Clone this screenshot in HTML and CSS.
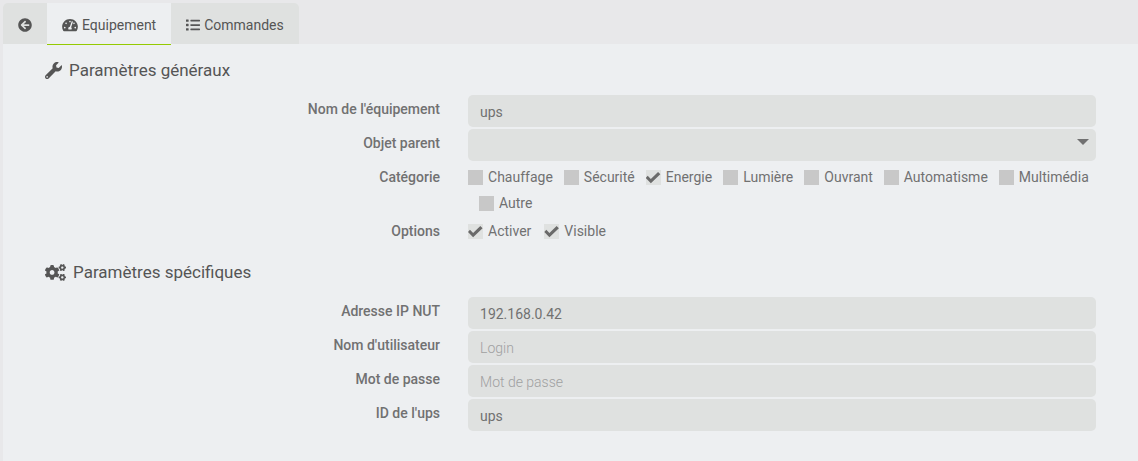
FILE: index.html
```html
<!DOCTYPE html>
<html lang="fr">
<head>
<meta charset="utf-8">
<meta name="viewport" content="width=device-width, initial-scale=1">
<title>Equipement</title>
<link rel="stylesheet" href="styles.css">
</head>
<body>
<nav class="tabs">
  <a class="tab" href="#retour" aria-label="Retour"><svg class="icon" viewBox="0 0 512 512"><path d="M256 504C119 504 8 393 8 256S119 8 256 8s248 111 248 248-111 248-248 248zm28.900-143.600L209.400 288H392c13.300 0 24-10.700 24-24v-16c0-13.300-10.700-24-24-24H209.400l75.500-72.400c9.700-9.300 9.900-24.800.4-34.300l-11-10.900c-9.400-9.400-24.600-9.400-33.900 0L107.700 239c-9.400 9.400-9.400 24.600 0 33.900l132.700 132.700c9.400 9.400 24.600 9.400 33.900 0l11-10.900c9.500-9.500 9.300-25-.4-34.300z"/></svg></a>
  <a class="tab tab-active" href="#equipement" aria-current="page"><svg class="icon icon-gauge" viewBox="0 0 576 512"><path d="M288 32C128.940 32 0 160.940 0 320c0 52.800 14.250 102.260 39.060 144.800 5.610 9.620 16.300 15.200 27.440 15.200h443c11.140 0 21.830-5.580 27.440-15.200C561.750 422.260 576 372.800 576 320c0-159.060-128.940-288-288-288zm0 64c14.710 0 26.580 10.130 30.320 23.650-1.110 2.260-2.640 4.230-3.450 6.670l-9.220 27.670c-5.130 3.490-10.970 6.010-17.640 6.010-17.670 0-32-14.330-32-32S270.330 96 288 96zM96 384c-17.670 0-32-14.330-32-32s14.330-32 32-32 32 14.330 32 32-14.330 32-32 32zm48-160c-17.670 0-32-14.330-32-32s14.330-32 32-32 32 14.330 32 32-14.330 32-32 32zm246.770-72.410l-61.330 184C343.130 347.330 352 364.540 352 384c0 11.720-3.380 22.550-8.880 32H232.880c-5.500-9.450-8.880-20.280-8.880-32 0-33.940 26.500-61.430 59.900-63.590l61.340-184.010c4.170-12.560 17.730-19.450 30.360-15.170 12.570 4.190 19.350 17.790 15.170 30.360zm14.660 57.200l15.520-46.550c3.470-1.290 7.130-2.230 11.050-2.230 17.670 0 32 14.330 32 32s-14.330 32-32 32c-11.380-.01-20.890-6.280-26.570-15.220zM480 384c-17.670 0-32-14.330-32-32s14.330-32 32-32 32 14.330 32 32-14.330 32-32 32z"/></svg>Equipement</a>
  <a class="tab" href="#commandes"><svg class="icon" viewBox="0 0 512 512"><path d="M16 52h64q16 0 16 16v56q0 16-16 16H16q-16 0-16-16V68q0-16 16-16zM16 212h64q16 0 16 16v56q0 16-16 16H16q-16 0-16-16v-56q0-16 16-16zM16 372h64q16 0 16 16v56q0 16-16 16H16q-16 0-16-16v-56q0-16 16-16zM176 64h320q16 0 16 16v32q0 16-16 16H176q-16 0-16-16V80q0-16 16-16zM176 224h320q16 0 16 16v32q0 16-16 16H176q-16 0-16-16v-32q0-16 16-16zM176 384h320q16 0 16 16v32q0 16-16 16H176q-16 0-16-16v-32q0-16 16-16z"/></svg>Commandes</a>
</nav>
<main class="panel">
  <form>
    <section class="section">
      <h2 class="title"><svg class="icon-wrench" viewBox="0 0 512 512"><path d="M507.730 109.100c-2.240-9.030-13.540-12.090-20.120-5.510l-74.360 74.360-67.880-11.310-11.310-67.880 74.360-74.360c6.620-6.620 3.430-17.900-5.660-20.160-47.380-11.740-99.550.91-136.580 37.930-39.640 39.640-50.550 97.100-34.050 147.200L18.740 402.760c-24.990 24.990-24.990 65.510 0 90.500 24.990 24.990 65.510 24.990 90.500 0l213.210-213.210c50.120 16.710 107.470 5.680 147.370-34.220 37.070-37.070 49.700-89.320 37.910-136.730zM64 472c-13.250 0-24-10.750-24-24 0-13.260 10.750-24 24-24s24 10.740 24 24c0 13.250-10.750 24-24 24z"/></svg>Paramètres généraux</h2>
      <div class="rows">
        <div class="row"><label class="label" for="nom">Nom de l'équipement</label><input class="field" id="nom" type="text" value="ups"></div>
        <div class="row"><label class="label" for="parent">Objet parent</label>
          <div class="select-wrap"><select class="field" id="parent"><option></option></select></div></div>
        <div class="row" role="group" aria-labelledby="categorie"><span class="label" id="categorie">Catégorie</span>
          <div class="checks">
            <label class="check"><input type="checkbox">Chauffage</label>
            <label class="check"><input type="checkbox">Sécurité</label>
            <label class="check"><input type="checkbox" checked>Energie</label>
            <label class="check"><input type="checkbox">Lumière</label>
            <label class="check"><input type="checkbox">Ouvrant</label>
            <label class="check"><input type="checkbox">Automatisme</label>
            <label class="check"><input type="checkbox">Multimédia</label>
            <label class="check"><input type="checkbox">Autre</label>
          </div></div>
        <div class="row" role="group" aria-labelledby="options"><span class="label" id="options">Options</span>
          <div class="checks checks-options">
            <label class="check"><input type="checkbox" checked>Activer</label>
            <label class="check"><input type="checkbox" checked>Visible</label>
          </div></div>
      </div>
    </section>
    <section class="section">
      <h2 class="title"><svg class="icon-cogs" viewBox="0 0 640 512"><path d="M512.100 191l-8.200 14.300c-3 5.300-9.400 7.500-15.100 5.400-11.800-4.400-22.600-10.700-32.100-18.600-4.600-3.800-5.800-10.500-2.800-15.700l8.200-14.300c-6.900-8-12.300-17.300-15.900-27.400h-16.500c-6 0-11.200-4.300-12.200-10.300-2-12-2.100-24.600 0-37.100 1-6 6.200-10.400 12.200-10.400h16.500c3.600-10.100 9-19.400 15.900-27.400l-8.200-14.300c-3-5.200-1.900-11.900 2.800-15.700 9.500-7.900 20.400-14.200 32.100-18.600 5.700-2.100 12.100.1 15.100 5.400l8.200 14.300c10.500-1.900 21.200-1.900 31.700 0L552 6.300c3-5.300 9.400-7.500 15.100-5.400 11.800 4.400 22.600 10.700 32.100 18.600 4.600 3.800 5.800 10.500 2.800 15.700l-8.200 14.300c6.900 8 12.300 17.300 15.900 27.400h16.500c6 0 11.200 4.300 12.200 10.300 2 12 2.100 24.600 0 37.100-1 6-6.200 10.400-12.200 10.400h-16.500c-3.600 10.100-9 19.400-15.900 27.400l8.200 14.300c3 5.200 1.900 11.900-2.800 15.700-9.500 7.900-20.400 14.200-32.100 18.600-5.700 2.100-12.100-.1-15.100-5.400l-8.200-14.300c-10.400 1.900-21.200 1.900-31.700 0zm-10.500-58.800c38.500 29.600 82.400-14.300 52.800-52.800-38.500-29.700-82.400 14.300-52.800 52.800zM386.300 286.100l33.700 16.800c10.100 5.800 14.500 18.100 10.500 29.100-8.900 24.200-26.400 46.400-42.600 65.800-7.400 8.900-20.200 11.100-30.300 5.300l-29.100-16.800c-16 13.700-34.600 24.600-54.900 31.700v33.600c0 11.600-8.300 21.600-19.700 23.600-24.600 4.200-50.400 4.400-75.900 0-11.500-2-20-11.900-20-23.600V418c-20.300-7.200-38.900-18-54.900-31.700L74 403c-10 5.800-22.900 3.600-30.300-5.300-16.200-19.400-33.300-41.600-42.200-65.700-4-10.900.4-23.200 10.500-29.100l33.300-16.800c-3.900-20.900-3.900-42.400 0-63.400L12 205.800c-10.100-5.800-14.600-18.100-10.500-29 8.900-24.200 26-46.400 42.200-65.800 7.400-8.900 20.200-11.100 30.300-5.300l29.100 16.800c16-13.700 34.600-24.600 54.900-31.700V57.100c0-11.500 8.200-21.500 19.600-23.500 24.600-4.200 50.500-4.400 76-.1 11.500 2 20 11.900 20 23.600v33.600c20.300 7.200 38.900 18 54.900 31.700l29.100-16.800c10-5.800 22.900-3.600 30.300 5.300 16.200 19.400 33.200 41.600 42.100 65.800 4 10.900.1 23.200-10 29.100l-33.700 16.800c3.900 21 3.900 42.500 0 63.500zm-117.600 21.100c59.200-77-28.700-164.900-105.700-105.700-59.200 77 28.700 164.900 105.700 105.700zm243.400 182.700l-8.200 14.300c-3 5.300-9.400 7.500-15.100 5.400-11.800-4.400-22.600-10.700-32.100-18.600-4.600-3.800-5.800-10.500-2.800-15.700l8.200-14.300c-6.900-8-12.300-17.300-15.900-27.400h-16.500c-6 0-11.200-4.300-12.200-10.300-2-12-2.100-24.600 0-37.100 1-6 6.200-10.400 12.200-10.400h16.500c3.600-10.100 9-19.400 15.900-27.400l-8.200-14.300c-3-5.200-1.900-11.900 2.800-15.700 9.500-7.900 20.400-14.200 32.100-18.600 5.700-2.100 12.100.1 15.100 5.400l8.200 14.300c10.500-1.900 21.200-1.900 31.700 0l8.200-14.300c3-5.300 9.400-7.500 15.100-5.400 11.800 4.400 22.600 10.700 32.100 18.600 4.600 3.800 5.800 10.500 2.800 15.700l-8.200 14.300c6.900 8 12.300 17.300 15.900 27.400h16.500c6 0 11.200 4.300 12.200 10.300 2 12 2.100 24.600 0 37.100-1 6-6.200 10.400-12.200 10.400h-16.500c-3.600 10.100-9 19.400-15.900 27.400l8.200 14.300c3 5.200 1.900 11.900-2.800 15.700-9.500 7.900-20.400 14.200-32.100 18.600-5.700 2.100-12.100-.1-15.100-5.400l-8.200-14.300c-10.400 1.900-21.200 1.900-31.700 0zM501.600 431c38.500 29.600 82.400-14.300 52.800-52.800-38.500-29.600-82.400 14.300-52.800 52.800z"/></svg>Paramètres spécifiques</h2>
      <div class="rows">
        <div class="row"><label class="label" for="ip">Adresse IP NUT</label><input class="field" id="ip" type="text" value="192.168.0.42"></div>
        <div class="row"><label class="label" for="login">Nom d'utilisateur</label><input class="field" id="login" type="text" placeholder="Login"></div>
        <div class="row"><label class="label" for="pass">Mot de passe</label><input class="field" id="pass" type="password" placeholder="Mot de passe"></div>
        <div class="row"><label class="label" for="ups">ID de l'ups</label><input class="field" id="ups" type="text" value="ups"></div>
      </div>
    </section>
  </form>
</main>
</body>
</html>
```
FILE: styles.css
```css
* {
  box-sizing: border-box;
}

body {
  display: flex;
  flex-direction: column;
  min-height: 100vh;
  margin: 0;
  padding: 3px 0 0 3px;
  background: #e8e8ea;
  color: #717171;
  font: 14px/20px Roboto, sans-serif;
}

svg {
  flex: none;
  fill: currentColor;
}

.tabs {
  display: flex;
  z-index: 1;
  align-self: flex-start;
  border-radius: 5px 5px 0 0;
  background: #dfe1e0;
  overflow: hidden;
}

.tab {
  display: flex;
  align-items: center;
  gap: 4px;
  height: 42px;
  padding: 2px 15px 0;
  border-bottom: 1px solid #edeff1;
  color: #555;
  text-decoration: none;
}

.tab-active {
  border-bottom-color: #94ca02;
  background: #edeff1;
}

.icon {
  width: 14px;
  height: 14px;
}

.icon-gauge {
  width: 16px;
}

.panel {
  flex: 1;
  padding: 14px 42px 28px;
  margin-top: -1px;
  background: #edeff1;
}

.section + .section {
  margin-top: 17px;
}

.title {
  display: flex;
  align-items: center;
  gap: 7px;
  margin: 0 0 13px;
  color: #555;
  font-size: 17px;
  font-weight: 400;
  line-height: 24px;
}

.icon-wrench {
  width: 17px;
  height: 17px;
}

.icon-cogs {
  width: 21px;
  height: 17px;
}

.rows {
  display: grid;
  gap: 2px;
}

.row {
  display: grid;
  grid-template-columns: 39fr 62fr;
  column-gap: 28px;
}

.label {
  padding-top: 4px;
  font-weight: 500;
  text-align: right;
}

.field {
  width: 100%;
  min-width: 0;
  height: 32px;
  padding: 2px 12px 0;
  border: 0;
  border-radius: 5px;
  outline: 0;
  background: #dfe1e0;
  color: #717171;
  font: inherit;
  appearance: none;
}

.field::placeholder {
  color: #a0a0a0;
  font-weight: 300;
  opacity: 1;
}

.select-wrap {
  display: grid;
  position: relative;
}

.select-wrap::after {
  position: absolute;
  top: 10px;
  right: 7px;
  width: 12px;
  height: 6px;
  background: #717171;
  clip-path: polygon(0 0, 100% 0, 50% 100%);
  content: "";
  pointer-events: none;
}

.checks {
  display: flex;
  flex-wrap: wrap;
  gap: 6px 0;
  padding: 4px 0 2px;
}

.check {
  display: flex;
  align-items: center;
  gap: 5px;
}

.check + .check {
  margin-left: 11px;
}

.checks-options .check + .check {
  margin-left: 13px;
}

.check input {
  width: 15px;
  height: 15px;
  margin: 0;
  background: #c8c8c8;
  appearance: none;
}

.check input:checked {
  background: #dfe1e0;
}

.check input:checked::before {
  display: block;
  width: 15px;
  height: 15px;
  background: #6a6a6a;
  clip-path: polygon(0 56%, 13% 42%, 34% 63%, 82% 17%, 97% 31%, 34% 92%);
  content: "";
}
```
